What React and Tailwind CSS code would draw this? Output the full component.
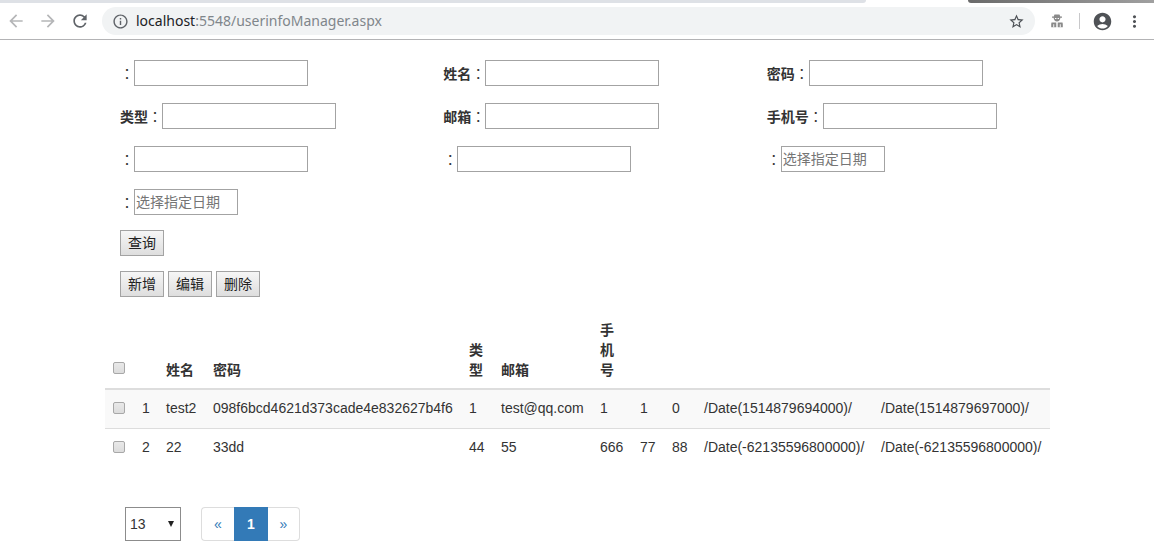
import React, { useState } from 'react';
import { MdArrowBack, MdArrowForward, MdRefresh, MdInfoOutline, MdStarBorder, MdAccountCircle, MdMoreVert } from 'react-icons/md';

const fields = [
  { id: 'id', label: '' },
  { id: 'name', label: '姓名' },
  { id: 'password', label: '密码' },
  { id: 'type', label: '类型' },
  { id: 'email', label: '邮箱' },
  { id: 'phone', label: '手机号' },
  { id: 'status', label: '' },
  { id: 'level', label: '' },
  { id: 'dateFrom', label: '', date: true },
  { id: 'dateTo', label: '', date: true },
];

const columns = [
  { title: '', width: 'w-[24px]' },
  { title: '姓名', width: 'w-[47px]' },
  { title: '密码', width: 'w-[256px]' },
  { title: '类型', width: 'w-[32px]' },
  { title: '邮箱', width: 'w-[99px]' },
  { title: '手机号', width: 'w-[40px]' },
  { title: '', width: 'w-[32px]' },
  { title: '', width: 'w-[32px]' },
  { title: '', width: 'w-[177px]' },
  { title: '', width: 'w-[177px]' },
];

const rows = [
  ['1', 'test2', '098f6bcd4621d373cade4e832627b4f6', '1', 'test@qq.com', '1', '1', '0', '/Date(1514879694000)/', '/Date(1514879697000)/'],
  ['2', '22', '33dd', '44', '55', '666', '77', '88', '/Date(-62135596800000)/', '/Date(-62135596800000)/'],
];

function ExtensionIcon() {
  return (
    <svg viewBox="0 0 14 14" className="size-3.5" fill="#8a8a8a" aria-hidden="true">
      <path d="M4.5.5h5l.8 2H12v1.2h-1.6C10.200 6 9 7.500 7 7.500S3.800 6 3.600 3.700H2V2.500h1.700z" />
      <path d="M5 4h1.400v1.100H5zM7.600 4H9v1.100H7.600z" fill="#fff" />
      <path d="M1.500 8.500h4.800v4.700H1.200V10zM7.700 8.500h4.800l.3 1.500v3.200H7.700z" />
      <path d="M3.300 10.200h.9v3h-.9zM9.800 10.200h.9v3h-.9z" fill="#fff" />
    </svg>
  );
}

function BrowserBar() {
  return (
    <header className="border-b border-[#b3b3b5] font-['Noto_Sans','Open_Sans',sans-serif]">
      <div className="flex h-[3px] justify-between">
        <div className="w-3/4 rounded-br-md bg-[#dee1e6]" />
        <div className="w-[186px] rounded-bl-md bg-linear-to-r from-[#6b6b6b] to-[#a0a0a0]" />
      </div>
      <div className="flex h-9 items-center">
        <button type="button" aria-label="Back" className="ml-1.5 text-[#b5b6b8]"><MdArrowBack size={20} /></button>
        <button type="button" aria-label="Forward" className="ml-3 text-[#b5b6b8]"><MdArrowForward size={20} /></button>
        <button type="button" aria-label="Reload" className="ml-3 text-[#5f6368]"><MdRefresh size={20} /></button>
        <div className="ml-3 flex h-7 flex-1 items-center rounded-full bg-[#f1f3f4] px-2.5">
          <MdInfoOutline size={17} className="text-[#5f6368]" />
          <p className="ml-[7px] flex-1 text-sm text-[#80868b]">
            <span className="text-[#202124]">localhost</span>:5548/userinfoManager.aspx
          </p>
          <button type="button" aria-label="Bookmark" className="text-[#4b4f54]"><MdStarBorder size={17} /></button>
        </div>
        <button type="button" aria-label="Extension" className="ml-[15px]"><ExtensionIcon /></button>
        <div className="ml-[15px] h-4 w-px bg-[#c8c8ca]" />
        <button type="button" aria-label="Account" className="ml-3 text-[#4f5256]"><MdAccountCircle size={21} /></button>
        <button type="button" aria-label="Menu" className="mr-2.5 ml-3 text-[#4f5256]"><MdMoreVert size={19} /></button>
      </div>
    </header>
  );
}

function SearchField({ id, label, date }) {
  return (
    <div className="flex h-[26px] items-center px-[15px]">
      <label htmlFor={id} className="font-bold whitespace-nowrap">
        {label}
        <span className="font-['Noto_Sans_CJK_TC',sans-serif] font-normal">：</span>
      </label>
      <input
        id={id}
        type="text"
        placeholder={date ? '选择指定日期' : undefined}
        className={`h-[26px] border border-[#a3a3a3] bg-white px-px placeholder:text-[#757575] ${date ? 'w-[104px]' : 'w-[174px]'}`}
      />
    </div>
  );
}

function ActionButton({ children }) {
  return (
    <button
      type="button"
      className="h-[26px] border border-[#a3a3a3] bg-linear-to-b from-[#f6f6f6] to-[#dedede] px-[7px] text-[#222]"
    >
      {children}
    </button>
  );
}

function RowCheckbox({ label, checked, onChange }) {
  return (
    <input
      type="checkbox"
      aria-label={label}
      checked={checked}
      onChange={onChange}
      className="block size-3 appearance-none rounded-xs border border-[#a8a8a8] bg-linear-to-b from-[#e9e9e9] to-[#dcdcdc] checked:bg-[#337ab7]"
    />
  );
}

function UserTable() {
  const [selected, setSelected] = useState([]);

  const toggle = (id) => {
    setSelected(selected.includes(id) ? selected.filter((s) => s !== id) : [...selected, id]);
  };
  const allSelected = selected.length === rows.length;

  return (
    <table className="w-[945px] table-fixed border-collapse text-left">
      <thead>
        <tr className="border-b-2 border-[#ddd] align-bottom">
          <th className="w-[29px] p-2 pb-3.5">
            <RowCheckbox
              label="全选"
              checked={allSelected}
              onChange={() => setSelected(allSelected ? [] : rows.map((r) => r[0]))}
            />
          </th>
          {columns.map((col, i) => (
            <th key={i} className={`p-2 ${col.width}`}>{col.title}</th>
          ))}
        </tr>
      </thead>
      <tbody>
        {rows.map((row) => (
          <tr key={row[0]} className="border-t border-[#ddd] first:border-t-0 odd:bg-[#f9f9f9]">
            <td className="px-2 pt-2 pb-2.5">
              <RowCheckbox label={row[0]} checked={selected.includes(row[0])} onChange={() => toggle(row[0])} />
            </td>
            {row.map((cell, i) => (
              <td key={i} className="px-2 pt-2 pb-2.5 whitespace-nowrap">{cell}</td>
            ))}
          </tr>
        ))}
      </tbody>
    </table>
  );
}

function Pager() {
  return (
    <div className="flex items-center gap-5 pl-5">
      <div className="relative">
        <select
          aria-label="每页条数"
          defaultValue="13"
          className="h-[34px] w-14 appearance-none border border-[#8c8c8c] bg-white pl-1 text-[#333]"
        >
          <option>13</option>
          <option>20</option>
          <option>50</option>
        </select>
        <svg viewBox="0 0 6 6" className="pointer-events-none absolute top-3.5 right-[7px] size-1.5" fill="#222" aria-hidden="true">
          <path d="M0 0h6L3 6z" />
        </svg>
      </div>
      <nav className="flex h-[34px] text-[#337ab7]">
        <a href="#prev" className="flex w-[33px] items-center justify-center rounded-l border border-r-0 border-[#ddd]">«</a>
        <a href="#1" className="flex w-[34px] items-center justify-center bg-[#337ab7] font-bold text-white">1</a>
        <a href="#next" className="flex w-8 items-center justify-center rounded-r border border-l-0 border-[#ddd]">»</a>
      </nav>
    </div>
  );
}

export default function App() {
  return (
    <div className="bg-white font-['Liberation_Sans','Noto_Sans_CJK_SC',sans-serif] text-sm/5 text-[#333]">
      <BrowserBar />
      <main className="pt-5 pb-2.5 pl-[26px]">
        <div className="mx-auto max-w-[970px]">
          <form className="grid grid-cols-3 gap-y-[17px]">
            {fields.map((field) => (
              <SearchField key={field.id} {...field} />
            ))}
          </form>
          <div className="mt-[15px] flex px-[15px]">
            <ActionButton>查询</ActionButton>
          </div>
          <div className="mt-[15px] mb-[15px] flex gap-1 px-[15px]">
            <ActionButton>新增</ActionButton>
            <ActionButton>编辑</ActionButton>
            <ActionButton>删除</ActionButton>
          </div>
          <UserTable />
          <div className="mt-10">
            <Pager />
          </div>
        </div>
      </main>
    </div>
  );
}
